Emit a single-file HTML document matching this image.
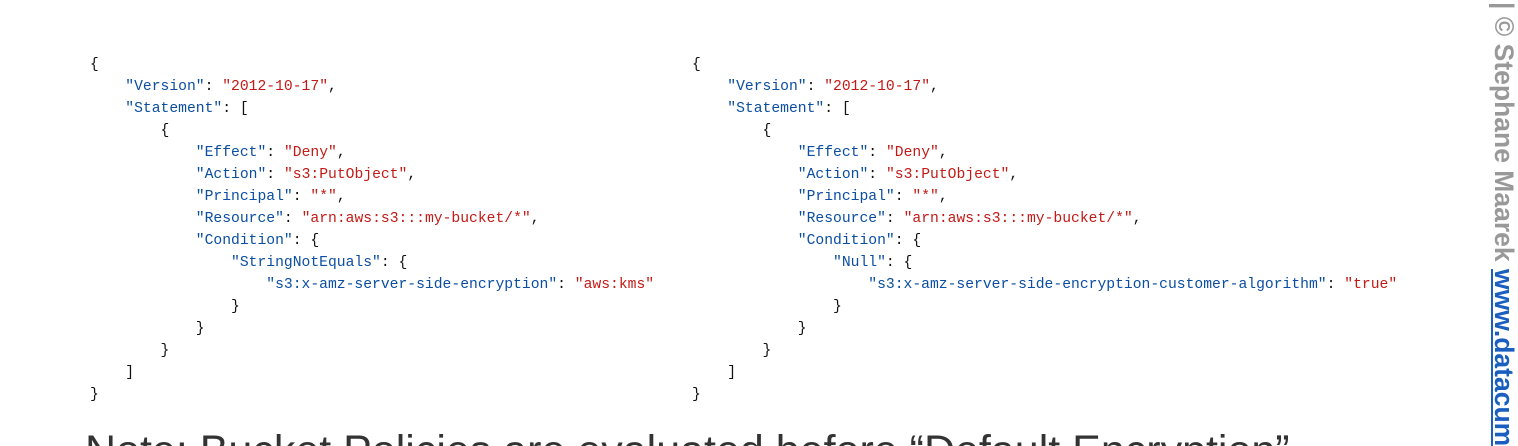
<!DOCTYPE html>
<html><head><meta charset="utf-8"><style>
html,body{margin:0;padding:0;background:#fff;width:1518px;height:446px;overflow:hidden;position:relative}
pre{position:absolute;margin:0;font-family:"Liberation Mono",monospace;font-size:14.7px;line-height:22px;color:#111}
.k{color:#0b4ea2}.s{color:#c41a16}
.note{position:absolute;left:85px;top:426px;font-family:"Liberation Sans",sans-serif;font-size:43px;color:#333;white-space:nowrap;line-height:50px}
.side{position:absolute;left:1490px;top:2px;transform-origin:0 0;transform:translate(28px,0) rotate(90deg);font-family:"Liberation Sans",sans-serif;font-weight:bold;font-size:26.5px;white-space:nowrap;color:#999;line-height:28px}
.side a{color:#1a5fc0;text-decoration:underline}
</style></head><body>
<pre style="left:90px;top:54px">{
    <span class="k">"Version"</span>: <span class="s">"2012-10-17"</span>,
    <span class="k">"Statement"</span>: [
        {
            <span class="k">"Effect"</span>: <span class="s">"Deny"</span>,
            <span class="k">"Action"</span>: <span class="s">"s3:PutObject"</span>,
            <span class="k">"Principal"</span>: <span class="s">"*"</span>,
            <span class="k">"Resource"</span>: <span class="s">"arn:aws:s3:::my-bucket/*"</span>,
            <span class="k">"Condition"</span>: {
                <span class="k">"StringNotEquals"</span>: {
                    <span class="k">"s3:x-amz-server-side-encryption"</span>: <span class="s">"aws:kms"</span>
                }
            }
        }
    ]
}</pre>
<pre style="left:692px;top:54px">{
    <span class="k">"Version"</span>: <span class="s">"2012-10-17"</span>,
    <span class="k">"Statement"</span>: [
        {
            <span class="k">"Effect"</span>: <span class="s">"Deny"</span>,
            <span class="k">"Action"</span>: <span class="s">"s3:PutObject"</span>,
            <span class="k">"Principal"</span>: <span class="s">"*"</span>,
            <span class="k">"Resource"</span>: <span class="s">"arn:aws:s3:::my-bucket/*"</span>,
            <span class="k">"Condition"</span>: {
                <span class="k">"Null"</span>: {
                    <span class="k">"s3:x-amz-server-side-encryption-customer-algorithm"</span>: <span class="s">"true"</span>
                }
            }
        }
    ]
}</pre>
<div class="note">Note: Bucket Policies are evaluated before “Default Encryption”</div>
<div class="side">| © Stephane Maarek <a>www.datacumulus.com</a></div>
</body></html>
